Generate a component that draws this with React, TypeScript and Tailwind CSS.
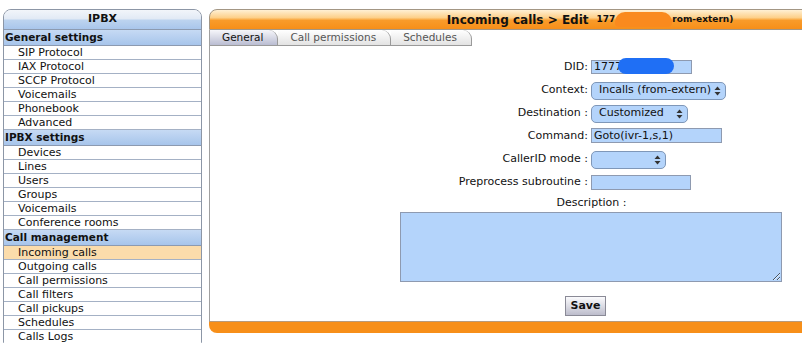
import React from "react";

// 왼쪽 메뉴 구성
const sections = [
    {
        title: "General settings",
        items: ["SIP Protocol", "IAX Protocol", "SCCP Protocol", "Voicemails", "Phonebook", "Advanced"],
    },
    {
        title: "IPBX settings",
        items: ["Devices", "Lines", "Users", "Groups", "Voicemails", "Conference rooms"],
    },
    {
        title: "Call management",
        items: [
            "Incoming calls",
            "Outgoing calls",
            "Call permissions",
            "Call filters",
            "Call pickups",
            "Schedules",
            "Calls Logs",
        ],
    },
];

const tabs = ["General", "Call permissions", "Schedules"];

function Arrows() {
    return (
        <svg width="7" height="10" viewBox="0 0 7 10" className="shrink-0">
            <path d="M3.5 0.5 L6.5 4 L0.5 4 Z" fill="#333" />
            <path d="M3.5 9.5 L6.5 6 L0.5 6 Z" fill="#333" />
        </svg>
    );
}

function FakeSelect({ value, width }: { value: string; width: string }) {
    return (
        <div
            className={`${width} flex h-[18px] items-center justify-between rounded-[5px] border border-[#7f97b8] bg-[#b4d4fb] pl-[7px] pr-[4px] text-[11px] text-[#111]`}
        >
            <span>{value}</span>
            <Arrows />
        </div>
    );
}

function Row({ label, children }: { label: string; children: React.ReactNode }) {
    return (
        <div className="flex h-[23px] items-center">
            <div className="w-[381px] pr-[3px] text-right">{label}</div>
            <div className="flex-1">{children}</div>
        </div>
    );
}

export default function App() {
    return (
        <div className="flex h-[343px] w-[802px] overflow-hidden bg-white font-['DejaVu_Sans','Liberation_Sans',sans-serif] text-[11px] text-[#111]">
            {/* 사이드 메뉴 */}
            <aside className="ml-[3px] mt-[9px] w-[199px] shrink-0 rounded-t-[8px] border border-[#8c96a6]">
                <div className="flex h-[20px] items-center justify-center rounded-t-[7px] border-b border-[#8c9ab0] bg-[linear-gradient(#f2f5fa_0%,#e2eaf5_45%,#bcd3ef_55%,#a9c6eb_100%)] font-bold">
                    IPBX
                </div>
                {sections.map((section) => (
                    <div key={section.title}>
                        <div className="flex h-[16px] items-center border-b border-[#8c9ab0] bg-[linear-gradient(#c6daf4,#a7c5eb)] pl-[1px] text-[10.5px] font-bold">
                            {section.title}
                        </div>
                        {section.items.map((item) => (
                            <div
                                key={item}
                                className={`flex h-[14px] items-center border-b border-[#a4b1c5] pl-[14px] leading-[13px] ${
                                    item === "Incoming calls" ? "bg-[#fbdcab]" : "bg-white"
                                }`}
                            >
                                {item}
                            </div>
                        ))}
                    </div>
                ))}
            </aside>

            {/* 본문 패널 */}
            <main className="ml-[7px] mt-[9px] flex h-[324px] w-[762px] shrink-0 flex-col">
                <div className="flex h-[21px] items-center justify-center rounded-tl-[8px] border border-[#a39684] bg-[linear-gradient(#fff0d4_0%,#fdd08a_40%,#f99b2a_55%,#f78f19_100%)] font-bold">
                    <span className="text-[12px]">Incoming calls &gt; Edit</span>
                    <span className="ml-[8px] text-[9px]">177</span>
                    <span className="inline-block h-[15px] w-[57px] rounded-t-[10px] rounded-b-[4px] bg-[#fa8a1e]" />
                    <span className="text-[9px]">rom-extern)</span>
                </div>

                <div className="flex flex-1 flex-col border-l border-[#a0a0a0]">
                    {/* 탭 */}
                    <div className="flex h-[16px]">
                        {tabs.map((tab, i) => (
                            <div
                                key={tab}
                                className={`flex items-center rounded-tr-[9px] border-b border-r border-[#9a9a9a] pl-[12px] pr-[14px] text-[10.5px] ${
                                    i === 0
                                        ? "bg-[linear-gradient(#f6f6fa,#babdd2)] text-[#111]"
                                        : "bg-[linear-gradient(#ffffff,#e3e3e3)] text-[#555]"
                                }`}
                            >
                                {tab}
                            </div>
                        ))}
                    </div>

                    {/* 입력 폼 */}
                    <div className="flex flex-col pt-[10px]">
                        <Row label="DID:">
                            <div className="relative w-[101px]">
                                <input
                                    readOnly
                                    value="1777"
                                    className="h-[14px] w-[101px] border border-[#8e9ab0] bg-[#b4d4fb] px-[2px] text-[11px] leading-[12px] outline-none"
                                />
                                <span className="absolute left-[27px] top-[-1px] h-[16px] w-[56px] rounded-full bg-[#1f6ff5]" />
                            </div>
                        </Row>
                        <Row label="Context:">
                            <FakeSelect value="Incalls (from-extern)" width="w-[135px]" />
                        </Row>
                        <Row label="Destination :">
                            <FakeSelect value="Customized" width="w-[97px]" />
                        </Row>
                        <Row label="Command:">
                            <input
                                readOnly
                                value="Goto(ivr-1,s,1)"
                                className="h-[15px] w-[131px] border border-[#8e9ab0] bg-[#b4d4fb] px-[2px] text-[11px] leading-[13px] outline-none"
                            />
                        </Row>
                        <Row label="CallerID mode :">
                            <FakeSelect value="" width="w-[75px]" />
                        </Row>
                        <Row label="Preprocess subroutine :">
                            <input
                                readOnly
                                value=""
                                className="h-[15px] w-[100px] border border-[#8e9ab0] bg-[#b4d4fb] px-[2px] text-[11px] outline-none"
                            />
                        </Row>
                        <div className="flex h-[18px] items-center justify-center pl-[2px]">Description :</div>
                        <div className="flex justify-center">
                            <textarea
                                readOnly
                                className="ml-[1px] h-[70px] w-[382px] border border-[#8e9ab0] bg-[#b4d4fb] outline-none"
                            />
                        </div>
                        <div className="mt-[14px] flex justify-center pr-[10px]">
                            <button className="h-[20px] w-[41px] border border-[#8a8a96] bg-[linear-gradient(#fbfbfd,#bdbdcc)] text-[11px] font-bold">
                                Save
                            </button>
                        </div>
                    </div>
                </div>

                {/* 하단 바 */}
                <div className="mt-auto h-[12px] rounded-bl-[8px] border-t border-[#b89a7a] bg-[#f78f19]" />
            </main>
        </div>
    );
}
